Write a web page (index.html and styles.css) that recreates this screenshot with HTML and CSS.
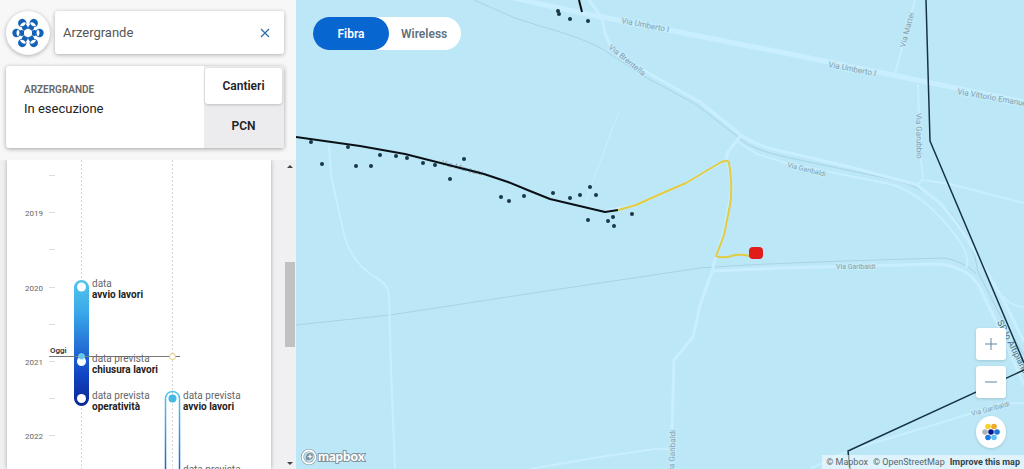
FILE: index.html
```
<!DOCTYPE html>
<html lang="it">
<head>
    <meta charset="UTF-8">
    <meta name="viewport" content="width=device-width, initial-scale=1.0">
    <title>Mappa copertura</title>
    <link rel="stylesheet" href="styles.css">
</head>
<body>
    <aside class="sidebar">
        <header class="top">
            <form class="search-row">
                <a class="logo" href="#" aria-label="Home">
                    <svg width="32" height="32" viewBox="-16 -16 32 32">
                        <defs>
                            <g id="petal">
                                <circle cx="11.5" cy="0" r="4.2" fill="#1462b8"/>
                                <circle cx="6.2" cy="0" r="2.9" fill="#1462b8"/>
                                <path d="M10 -3.400a4.500 4.500 0 0 1 0 6.800a4.500 4.500 0 0 1 -1.500 -3.400a4.500 4.500 0 0 1 1.500 -3.400z" fill="#fff"/>
                            </g>
                        </defs>
                        <use href="#petal"/>
                        <use href="#petal" transform="rotate(60)"/>
                        <use href="#petal" transform="rotate(120)"/>
                        <use href="#petal" transform="rotate(180)"/>
                        <use href="#petal" transform="rotate(240)"/>
                        <use href="#petal" transform="rotate(300)"/>
                        <circle r="4" fill="#fff"/>
                    </svg>
                </a>
                <div class="search">
                    <input type="text" value="Arzergrande" aria-label="Comune">
                    <button type="button" class="clear" aria-label="Cancella">
                        <svg width="10" height="10" viewBox="0 0 10 10"><path d="M1 1l8 8M9 1l-8 8" stroke="#2a6cb0" stroke-width="1.2"/></svg>
                    </button>
                </div>
            </form>
            <section class="card">
                <div class="card-info">
                    <h1>ARZERGRANDE</h1>
                    <p>In esecuzione</p>
                </div>
                <div class="tabs">
                    <button type="button" class="tab active">Cantieri</button>
                    <button type="button" class="tab">PCN</button>
                </div>
            </section>
        </header>

        <div class="scroll-area">
            <div class="panel">
                <svg class="timeline" width="264" height="400" viewBox="7 160 264 400">
                    <defs>
                        <linearGradient id="bar" x1="0" y1="0" x2="0" y2="1">
                            <stop offset="0" stop-color="#50c5ea"/>
                            <stop offset="0.25" stop-color="#3ba9ea"/>
                            <stop offset="0.75" stop-color="#1145c4"/>
                            <stop offset="1" stop-color="#0a2796"/>
                        </linearGradient>
                    </defs>
                    <!-- linee tratteggiate -->
                    <path class="guide" d="M81.500 160V560M172.500 160V560"/>
                    <path class="tick" d="M49 175.500h6M49 212.500h6M49 249.500h6M49 287.500h6M49 324.500h6M49 361.500h6M49 398.500h6M49 435.500h6"/>
                    <g class="year">
                        <text x="25" y="216">2019</text>
                        <text x="25" y="291">2020</text>
                        <text x="25" y="365">2021</text>
                        <text x="25" y="439">2022</text>
                    </g>
                    <!-- fibra -->
                    <rect x="74" y="280" width="15" height="126" rx="7.500" fill="url(#bar)"/>
                    <circle cx="81.500" cy="287" r="4.500" fill="#fff"/>
                    <circle cx="81.500" cy="361.500" r="4.500" fill="#fff"/>
                    <circle cx="81.500" cy="398.500" r="4.500" fill="#fff"/>
                    <!-- wireless -->
                    <rect x="165.500" y="391.500" width="14" height="126" rx="7" fill="none" stroke="url(#bar)" stroke-width="1.500"/>
                    <circle cx="172.500" cy="398.500" r="4" fill="#45b9e6"/>
                    <circle cx="172.500" cy="473" r="4" fill="#2c62b8"/>
                    <!-- oggi -->
                    <path class="today" d="M49 356.500H180"/>
                    <circle cx="81.500" cy="356.500" r="3" fill="#5cc9ea" stroke="#b9eaf8" stroke-width="0.500"/>
                    <circle cx="172.500" cy="356.500" r="3" fill="#fff" stroke="#e3c972"/>
                    <text class="today-label" x="50" y="353">Oggi</text>
                    <g class="label">
                        <text x="92" y="287">data</text>
                        <text x="92" y="298" class="strong">avvio lavori</text>
                        <text x="92" y="362">data prevista</text>
                        <text x="92" y="373" class="strong">chiusura lavori</text>
                        <text x="92" y="399">data prevista</text>
                        <text x="92" y="410" class="strong">operatività</text>
                        <text x="183" y="399">data prevista</text>
                        <text x="183" y="410" class="strong">avvio lavori</text>
                        <text x="183" y="473">data prevista</text>
                        <text x="183" y="484" class="strong">chiusura lavori</text>
                    </g>
                </svg>
            </div>
            <div class="scrollbar">
                <span class="arrow up"></span>
                <span class="thumb"></span>
                <span class="arrow down"></span>
            </div>
        </div>
    </aside>

    <main class="map">
        <svg class="map-canvas" viewBox="296 0 728 469" preserveAspectRatio="xMidYMid slice">
            <g class="river">
                <path d="M474 0L515 18L540 26Q590 40 607 52L640 74L697 105L738 137Q750 150 790 158L847 170L895 180Q925 187 950 212Q975 243 978 272L1000 315L1024 355"/>
                <path d="M296 325L390 315L540 292L700 268Q760 263 945 258Q962 261 976 273"/>
            </g>
            <g class="road">
                <path class="wide" d="M505 -4L540 4L602 17L790 54L922 81L1024 102"/>
                <path class="mid" d="M589 0L602 18Q606 45 618 54L650 74L700 102L741 135Q760 148 790 153L850 167L918 185"/>
                <path d="M915 0L895 74M918 85L920 150L923 178L918 185M923 180L950 184L1024 203"/>
                <path class="mid" d="M918 186L940 203Q960 225 980 260L1005 303L1024 342"/>
                <path d="M738 142L757 154L786 163L830 172L890 184Q925 194 955 235Q971 255 966 268"/>
                <path class="mid" d="M605 211L636 205L686 183L726 160L728 152L741 135M728 160L732 190L724 232L716 256L712 272L700 305L693 337L674 360L672 430L671 469"/>
                <path class="mid" d="M713 271L780 268L940 264Q970 268 980 288L1000 330L1024 385"/>
                <path d="M1003 296Q1010 306 1024 307"/>
                <path d="M329 145L331 175L343 230Q350 262 375 277Q387 283 389 294L391 370L395 469"/>
                <path d="M619 111L585 203" class="thin"/>
                <path d="M530 469L600 457L655 449H671M810 469L850 450L950 420L1000 404L1024 403"/>
            </g>
            <g class="street">
                <text transform="translate(621 23) rotate(11)">Via Umberto I</text>
                <text transform="translate(828 67) rotate(11)">Via Umberto I</text>
                <text transform="translate(957 94) rotate(10)">Via Vittorio Emanuele II</text>
                <text transform="translate(608 48) rotate(39)">Via Brentella</text>
                <text transform="translate(905 48) rotate(-75)">Via Mattei</text>
                <text transform="translate(916 113) rotate(89)">Via Garubbio</text>
                <text transform="translate(441 165) rotate(15)">Via Marconi</text>
                <g class="small">
                    <text transform="translate(787 167) rotate(14)">Via Garibaldi</text>
                    <text x="836" y="269">Via Garibaldi</text>
                    <text transform="translate(972 416) rotate(-15)">Via Garibaldi</text>
                </g>
                <text transform="translate(674 475) rotate(-88)">Via Garibaldi</text>
                <text class="dark" transform="translate(997 322) rotate(63)">SP lo Altipiano</text>
            </g>
            <g class="border">
                <path d="M926 0L930 141L1024 363"/>
                <path d="M1024 370L848 451L850 469"/>
            </g>
            <path class="fiber" d="M296 137L360 146L405 154L484 174L508 182L530 191L550 199L605 212L618 210M579 0L582 12"/>
            <path class="planned" d="M618 210L636 205L665 192L686 183L718 164Q728 158 729 163Q733 190 730 205L724 235L716 256Q724 259 735 255Q742 254 750 256"/>
            <rect x="749" y="247" width="14" height="12" rx="4" fill="#e21b1b"/>
            <g class="poles">
                <circle cx="311" cy="142" r="2"/><circle cx="322" cy="164" r="2"/><circle cx="348" cy="147" r="2"/>
                <circle cx="356" cy="166" r="2"/><circle cx="371" cy="166" r="2"/><circle cx="380" cy="155" r="2"/>
                <circle cx="396" cy="156" r="2"/><circle cx="407" cy="158" r="2"/><circle cx="423" cy="163" r="2"/>
                <circle cx="435" cy="165" r="2"/><circle cx="464" cy="159" r="2"/><circle cx="450" cy="179" r="2"/>
                <circle cx="501" cy="197" r="2"/><circle cx="509" cy="201" r="2"/><circle cx="524" cy="196" r="2"/>
                <circle cx="553" cy="193" r="2"/><circle cx="570" cy="198" r="2"/><circle cx="580" cy="195" r="2"/>
                <circle cx="590" cy="187" r="2"/><circle cx="596" cy="195" r="2"/><circle cx="588" cy="220" r="2"/>
                <circle cx="608" cy="221" r="2"/><circle cx="613" cy="217" r="2"/><circle cx="614" cy="226" r="2"/>
                <circle cx="632" cy="214" r="2"/><circle cx="558" cy="11" r="2"/><circle cx="559" cy="14" r="2"/>
                <circle cx="570" cy="19" r="2"/><circle cx="588" cy="21" r="2"/>
            </g>
        </svg>

        <div class="switch">
            <button type="button" class="active">Fibra</button>
            <button type="button">Wireless</button>
        </div>

        <div class="controls">
            <button type="button" aria-label="Zoom in">
                <svg width="12" height="12" viewBox="0 0 12 12"><path d="M6 0v12M0 6h12" stroke="#5d87a1"/></svg>
            </button>
            <button type="button" aria-label="Zoom out">
                <svg width="12" height="12" viewBox="0 0 12 12"><path d="M0 6h12" stroke="#5d87a1"/></svg>
            </button>
            <button type="button" class="legend" aria-label="Legenda">
                <svg width="20" height="18" viewBox="0 0 20 18">
                    <circle cx="7" cy="3.500" r="2.800" fill="#f5d327"/>
                    <circle cx="13" cy="3.500" r="2.800" fill="#f0a829"/>
                    <circle cx="4" cy="9" r="2.800" fill="#adb4ba"/>
                    <circle cx="10" cy="9" r="2.800" fill="#06198c"/>
                    <circle cx="16" cy="9" r="2.800" fill="#1f74d8"/>
                    <circle cx="7" cy="14.500" r="2.800" fill="#1c7be0"/>
                    <circle cx="13" cy="14.500" r="2.800" fill="#5fc3f2"/>
                </svg>
            </button>
        </div>

        <a class="mapbox" href="#" aria-label="Mapbox">
            <svg width="70" height="20" viewBox="0 0 70 20">
                <circle cx="9" cy="10" r="6.500" fill="none" stroke="#82949d" stroke-width="3"/>
                <circle cx="9" cy="10" r="6.500" fill="none" stroke="#fff" stroke-width="1.800"/>
                <path d="M6 13c-1-5 1-7 4-7a3 3 0 0 1 3 3c0 3-3 5-7 4z" fill="#82949d"/>
                <path d="M10 7l1 2 2 0-2 1-1 2-1-2-2-1 2 0z" fill="#fff"/>
                <text x="18" y="14">mapbox</text>
            </svg>
        </a>
        <div class="attribution">
            <a href="#">© Mapbox</a>
            <a href="#">© OpenStreetMap</a>
            <a href="#" class="improve">Improve this map</a>
        </div>
    </main>
</body>
</html>
```
FILE: styles.css
```
* { box-sizing: border-box; }
body {
    margin: 0;
    height: 100vh;
    display: flex;
    overflow: hidden;
    font-family: Roboto, "Open Sans", sans-serif;
    color: #222;
}
button { font-family: inherit; border: none; padding: 0; cursor: pointer; }
a { text-decoration: none; color: inherit; }
svg { display: block; }

/* sidebar */
.sidebar {
    flex: 0 0 296px;
    display: flex;
    flex-direction: column;
    background: #f7f7f8;
}
.top { padding: 11px 12px 12px 6px; }
.search-row { display: flex; gap: 5px; margin: 0 0 11px; }
.logo {
    flex: 0 0 44px;
    height: 44px;
    border-radius: 50%;
    background: #fff;
    box-shadow: 0 1px 4px rgba(0, 0, 0, 0.3);
    display: flex;
    align-items: center;
    justify-content: center;
}
.search {
    flex: 1;
    display: flex;
    align-items: center;
    height: 43px;
    padding: 0 14px 0 8px;
    background: #fff;
    border-radius: 3px;
    box-shadow: 0 1px 4px rgba(0, 0, 0, 0.3);
}
.search input {
    flex: 1;
    min-width: 0;
    border: none;
    padding: 0;
    outline: none;
    background: none;
    font-family: inherit;
    font-size: 13px;
    color: #555;
}
.clear { background: none; }
.card {
    display: flex;
    height: 82px;
    background: #fff;
    border-radius: 3px;
    box-shadow: 0 1px 4px rgba(0, 0, 0, 0.35);
}
.card-info { flex: 1; padding: 16px 18px; }
.card h1 { margin: 0; font-size: 10px; line-height: 16px; font-weight: 600; color: #666; }
.card p { margin: 0; font-size: 13px; line-height: 22px; }
.tabs {
    width: 80px;
    padding: 2px 2px 0 1px;
    background: #ececee;
    display: flex;
    flex-direction: column;
}
.tab { flex: 1; background: none; font-size: 12px; font-weight: 600; color: #222; border-radius: 3px; }
.tab.active { flex: 0 0 36px; background: #fff; box-shadow: 0 1px 3px rgba(0, 0, 0, 0.2); }

/* timeline */
.scroll-area { flex: 1; min-height: 0; display: flex; padding-left: 7px; background: #f0f0f2; }
.panel { flex: 1; overflow: hidden; background: #fff; box-shadow: 0 0 4px rgba(0, 0, 0, 0.3); clip-path: inset(0 -6px); }
.guide { stroke: #d4d4d4; stroke-dasharray: 2 2; }
.tick { stroke: #ddd; }
.year { font-size: 8px; fill: #666; }
.label { font-size: 10px; fill: #666; }
.label .strong { font-weight: 700; fill: #222; }
.today { stroke: #777; }
.today-label { font-size: 8px; font-weight: 600; fill: #333; }
.scrollbar {
    width: 11px;
    margin: 0 1px 0 13px;
    display: grid;
    grid-template-rows: 12px 90fr 85px 110fr 12px;
    justify-items: center;
    align-items: center;
}
.thumb { grid-row: 3; width: 10px; height: 85px; background: #c1c1c1; }
.arrow { border: 3px solid transparent; }
.arrow.up { grid-row: 1; border-top: 0; border-bottom-color: #444; }
.arrow.down { grid-row: 5; border-bottom: 0; border-top-color: #444; }

/* map */
.map { flex: 1; position: relative; overflow: hidden; background: #bce7f7; }
.map-canvas { position: absolute; width: 100%; height: 100%; }
.map-canvas path { fill: none; stroke-linejoin: round; }
.river path { stroke: #a9d3e1; }
.road path { stroke: #c9effe; stroke-width: 2; }
.road .mid { stroke-width: 3; }
.road .wide { stroke-width: 5; }
.road .thin { stroke-width: 1; }
.street { font-size: 8px; fill: #819fae; stroke: #c6edfc; stroke-width: 2px; paint-order: stroke; }
.street .small { font-size: 7px; }
.street .dark { font-size: 9px; fill: #4c6b7b; }
.border path { stroke: #153344; stroke-width: 1.5; }
.fiber { stroke: #0a1116; stroke-width: 2; }
.planned { stroke: #e3cb42; stroke-width: 2; }
.poles { fill: #193745; }

.switch {
    position: absolute;
    top: 17px;
    left: 17px;
    display: flex;
    background: #fff;
    border-radius: 17px;
}
.switch button {
    height: 33px;
    padding: 0 14px 0 12px;
    border-radius: 17px;
    background: none;
    font-size: 12px;
    font-weight: 600;
    color: #5f7180;
}
.switch .active { width: 76px; padding: 0; background: #0766cf; color: #fff; }

.controls {
    position: absolute;
    right: 18px;
    bottom: 21px;
    display: flex;
    flex-direction: column;
    gap: 6px;
}
.controls button {
    width: 30px;
    height: 32px;
    display: flex;
    align-items: center;
    justify-content: center;
    background: #fff;
    border-radius: 3px;
    box-shadow: 0 1px 3px rgba(0, 0, 0, 0.15);
}
.controls .legend { margin-top: 12px; border-radius: 50%; }

.mapbox { position: absolute; left: 4px; bottom: 2px; }
.mapbox text {
    font-family: Lato, sans-serif;
    font-size: 13px;
    font-weight: 900;
    fill: #fff;
    stroke: #82949d;
    stroke-width: 2px;
    paint-order: stroke;
}
.attribution {
    position: absolute;
    right: 0;
    bottom: 0;
    display: flex;
    gap: 5px;
    padding: 0 4px;
    background: rgba(255, 255, 255, 0.5);
    font-size: 9px;
    line-height: 14px;
    color: #56666e;
}
.attribution .improve { font-weight: 700; color: #34444c; }
```
